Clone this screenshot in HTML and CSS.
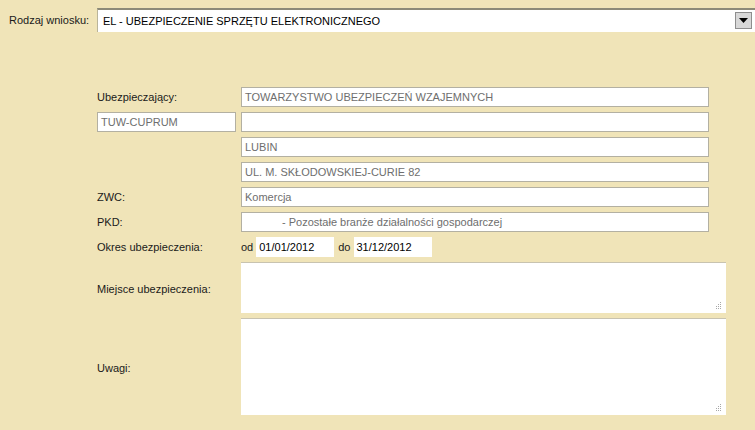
FILE: index.html
```html
<!DOCTYPE html>
<html lang="pl">
<head>
<meta charset="utf-8">
<title>Wniosek</title>
<link rel="stylesheet" href="styles.css">
</head>
<body>
<div class="page">
  <div class="top-row">
    <span class="top-label">Rodzaj wniosku:</span>
    <div class="select">
      <span class="select-text">EL - UBEZPIECZENIE SPRZĘTU ELEKTRONICZNEGO</span>
      <span class="select-btn"><svg width="9" height="5" viewBox="0 0 9 5"><polygon points="0,0 9,0 4.5,5" fill="#000"/></svg></span>
    </div>
  </div>

  <div class="form">
    <div class="label">Ubezpieczający:</div>
    <div class="field ro">TOWARZYSTWO UBEZPIECZEŃ WZAJEMNYCH</div>

    <div class="field ro short">TUW-CUPRUM</div>
    <div class="field ro"></div>

    <div class="label"></div>
    <div class="field ro">LUBIN</div>

    <div class="label"></div>
    <div class="field ro">UL. M. SKŁODOWSKIEJ-CURIE 82</div>

    <div class="label">ZWC:</div>
    <div class="field ro">Komercja</div>

    <div class="label">PKD:</div>
    <div class="field ro pkd">- Pozostałe branże działalności gospodarczej</div>

    <div class="label">Okres ubezpieczenia:</div>
    <div class="dates">
      <span class="dlabel">od</span>
      <span class="date">01/01/2012</span>
      <span class="dlabel">do</span>
      <span class="date">31/12/2012</span>
    </div>

    <div class="label">Miejsce ubezpieczenia:</div>
    <div class="area"><svg class="grip" width="7" height="7" viewBox="0 0 7 7"><rect x="6" y="0" width="1" height="1"/><rect x="4" y="2" width="1" height="1"/><rect x="6" y="2" width="1" height="1"/><rect x="2" y="4" width="1" height="1"/><rect x="4" y="4" width="1" height="1"/><rect x="6" y="4" width="1" height="1"/><rect x="2" y="6" width="1" height="1"/><rect x="4" y="6" width="1" height="1"/><rect x="6" y="6" width="1" height="1"/></svg></div>

    <div class="label">Uwagi:</div>
    <div class="area"><svg class="grip" width="7" height="7" viewBox="0 0 7 7"><rect x="6" y="0" width="1" height="1"/><rect x="4" y="2" width="1" height="1"/><rect x="6" y="2" width="1" height="1"/><rect x="2" y="4" width="1" height="1"/><rect x="4" y="4" width="1" height="1"/><rect x="6" y="4" width="1" height="1"/><rect x="2" y="6" width="1" height="1"/><rect x="4" y="6" width="1" height="1"/><rect x="6" y="6" width="1" height="1"/></svg></div>
  </div>
</div>
</body>
</html>
```
FILE: styles.css
```css
html, body {
  margin: 0;
  padding: 0;
  background: #f0e4b8;
  overflow: hidden;
}
body {
  width: 755px;
  height: 430px;
  font-family: "Liberation Sans", Arial, sans-serif;
  font-size: 11px;
  color: #1a1a1a;
}
.page {
  padding-top: 8px;
}
.top-row {
  display: flex;
  align-items: center;
  height: 24px;
}
.top-label {
  width: 97px;
  padding-left: 9px;
  box-sizing: border-box;
  flex: none;
  white-space: nowrap;
}
.select {
  position: relative;
  flex: none;
  width: 670px;
  height: 24px;
  box-sizing: border-box;
  background: #fff;
  border-top: 2px solid #8c8a78;
  border-left: 1px solid #b9b49a;
  display: flex;
  align-items: center;
  padding-left: 5px;
  color: #000;
}
.select-text {
  margin-top: -1px;
}
.select-btn {
  position: absolute;
  left: 637px;
  top: 2px;
  width: 15px;
  height: 15px;
  background: #d8d8d8;
  border: 1px solid #8e8e8e;
  display: flex;
  align-items: center;
  justify-content: center;
}
.form {
  display: grid;
  grid-template-columns: 139px 485px;
  grid-template-rows: repeat(7, 20px) 51px 97px;
  column-gap: 5px;
  row-gap: 5px;
  margin-top: 55px;
  padding-left: 97px;
}
.label {
  display: flex;
  align-items: center;
  color: #1a1a1a;
  white-space: nowrap;
}
.field {
  width: 468px;
  box-sizing: border-box;
  height: 20px;
  background: #fff;
  border: 1px solid #b3b0a2;
  padding-left: 3px;
  display: flex;
  align-items: center;
  color: #6e6e6e;
  white-space: pre;
}
.field.short {
  width: 139px;
}
.field.pkd {
  padding-left: 40px;
}
.dates {
  display: flex;
  align-items: center;
  height: 20px;
}
.dlabel {
  padding: 0 3px 0 0;
  color: #1a1a1a;
}
.date {
  width: 78px;
  height: 20px;
  box-sizing: border-box;
  background: #fff;
  padding-left: 3px;
  display: flex;
  align-items: center;
  color: #000;
  margin-right: 4px;
}
.area {
  position: relative;
  background: #fff;
  border-top: 1px solid #c8c3b0;
  box-sizing: border-box;
  width: 485px;
}
.label:has(+ .area) {
  padding-top: 3px;
}
.grip {
  position: absolute;
  right: 5px;
  bottom: 4px;
  fill: #a8a8a8;
}
```
